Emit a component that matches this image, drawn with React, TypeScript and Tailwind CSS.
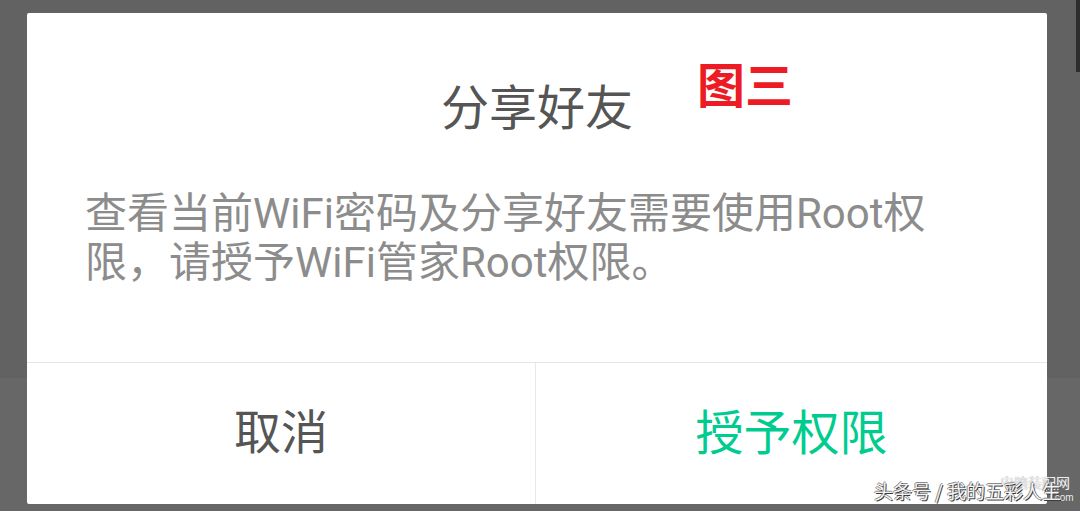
import React from "react";

const font = "font-['Roboto','Noto_Sans_CJK_SC',sans-serif]";

function Watermark() {
  return (
    <div className="absolute right-[6px] bottom-[6px] w-[200px] h-[42px] pointer-events-none font-['Noto_Sans_CJK_SC',sans-serif]">
      <span className="absolute left-[126px] top-[12px] text-[14px] leading-[14px] text-[#ececec] whitespace-nowrap [text-shadow:0_0_1px_#9a9a9a]">
        电脑装配网
      </span>
      <span className="absolute left-[178px] top-[30px] text-[10px] leading-[10px] text-[#ececec] font-['Liberation_Sans',sans-serif] [text-shadow:0_0_1px_#555]">
        .com
      </span>
      <span className="absolute left-0 top-[17px] text-[19px] leading-[22px] text-[#f2f2f2] whitespace-nowrap [text-shadow:1px_1px_0_#3a3a3a,-1px_0_0_#8a8a8a,0_-1px_0_#8a8a8a]">
        头条号 / 我的五彩人生
      </span>
    </div>
  );
}

export default function App() {
  return (
    <div className={`relative w-[1080px] h-[511px] overflow-hidden bg-[#626262] ${font}`}>
      <div className="absolute right-0 top-0 w-[4px] h-[72px] bg-[#2e2e2e]" />
      <div className="absolute left-0 right-0 top-[378px] bottom-0 bg-[#676767]" />

      <div className="relative pt-[13px] pl-[27px]">
        <div className="relative w-[1020px] h-[491px] bg-white rounded-[2px] flex flex-col">
          <h2 className="pt-[68px] h-[124px] text-center text-[48px] leading-[56px] text-[#555555] font-normal">
            分享好友
          </h2>

          <span className="absolute left-[670px] top-[41px] text-[48px] leading-[56px] font-bold text-[#ed1c24] font-['Noto_Sans_CJK_SC',sans-serif]">
            图三
          </span>

          <p className="pt-[52px] px-[58px] text-[42px] leading-[49px] text-[#8c8c8c]">
            查看当前WiFi密码及分享好友需要使用Root权
            <br />
            限，请授予WiFi管家Root权限。
          </p>

          <div className="mt-auto h-[142px] flex border-t border-[#e6e6e6]">
            <button className="w-[509px] h-full flex items-center justify-center text-[47px] text-[#555555] border-r border-[#e8e8e8]">
              取消
            </button>
            <button className="flex-1 h-full flex items-center justify-center text-[48px] text-[#00cc8f]">
              授予权限
            </button>
          </div>
        </div>
      </div>

      <Watermark />
    </div>
  );
}
